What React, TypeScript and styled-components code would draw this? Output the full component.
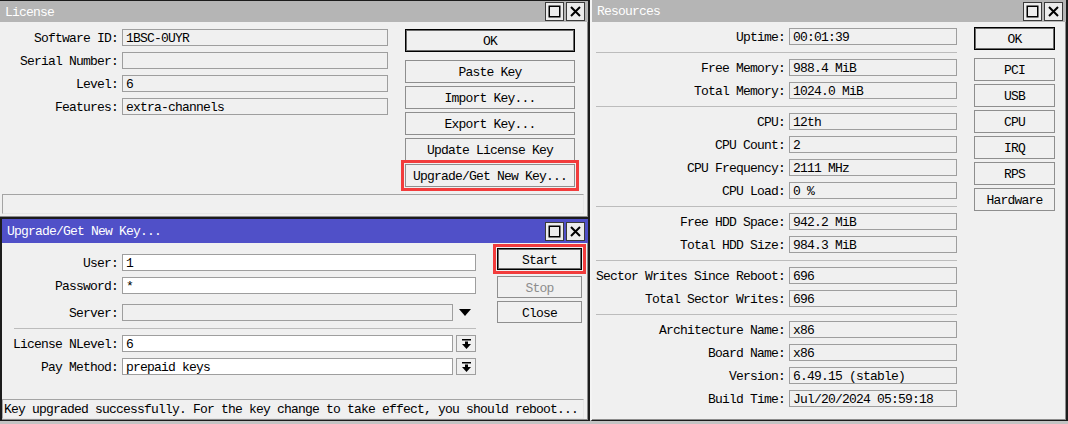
import React from "react";
import styled, { createGlobalStyle } from "styled-components";

const GlobalStyle = createGlobalStyle`
  * { box-sizing: border-box; }
  html, body { margin: 0; padding: 0; }
  body {
    background: #c4c4c4;
    font-family: "Liberation Mono", "DejaVu Sans Mono", monospace;
    font-size: 13px;
    letter-spacing: -0.8px;
    color: #000;
  }
`;

const Desktop = styled.main`
  display: flex;
  align-items: flex-start;
  width: 1068px;
  height: 424px;
  overflow: hidden;
  background: #c4c4c4;
`;

const LeftColumn = styled.div`
  display: flex;
  flex-direction: column;
  width: 590px;
  flex: none;
`;

const WindowFrame = styled.section<{
  $h: number;
  $w: number;
  $borders: string;
  $leftColor?: string;
}>`
  display: flex;
  flex-direction: column;
  width: ${(p) => p.$w}px;
  height: ${(p) => p.$h}px;
  flex: none;
  background: #f0f0f0;
  border-style: solid;
  border-color: #1c1c1c;
  border-left-color: ${(p) => p.$leftColor ?? "#1c1c1c"};
  border-width: ${(p) => p.$borders};
  box-shadow: inset -1px -1px 0 #8c8c8c;
`;

const TitleBar = styled.header<{ $active?: boolean; $h: number }>`
  display: flex;
  align-items: center;
  justify-content: space-between;
  height: ${(p) => p.$h}px;
  flex: none;
  padding: 0 3px 0 5px;
  background: ${(p) => (p.$active ? "#5050c8" : "#b5b5b5")};
  color: #fff;
`;

const TitleText = styled.span`
  white-space: nowrap;
  padding-top: 1px;
`;

const TitleButtons = styled.div`
  display: flex;
  gap: 2px;
`;

const TitleButton = styled.span`
  display: flex;
  align-items: center;
  justify-content: center;
  width: 19px;
  height: 19px;
  background: #ececec;
  border: 1px solid #3a3a3a;
`;

const Body = styled.div<{ $pt: number; $pl: number }>`
  display: flex;
  align-items: flex-start;
  flex: 1;
  padding: ${(p) => p.$pt}px 0 0 ${(p) => p.$pl}px;
`;

const Form = styled.div<{ $mt: number }>`
  display: flex;
  flex-direction: column;
  gap: 6px;
  margin-top: ${(p) => p.$mt}px;
  flex: none;
`;

const Row = styled.div<{ $extra?: number }>`
  display: flex;
  align-items: center;
  height: 17px;
  margin-top: ${(p) => p.$extra ?? 0}px;
`;

const Label = styled.span<{ $w: number }>`
  display: flex;
  justify-content: flex-end;
  width: ${(p) => p.$w}px;
  margin-right: 4px;
  padding-top: 2px;
  white-space: nowrap;
  flex: none;
`;

const Field = styled.div<{ $w: number; $tone?: "plain" | "white" | "disabled" }>`
  width: ${(p) => p.$w}px;
  height: 17px;
  flex: none;
  background: ${(p) => (p.$tone === "white" ? "#ffffff" : "#f0f0f0")};
  border: 1px solid #9e9e9e;
  padding: 1px 3px 0;
  line-height: 15px;
  white-space: pre;
  overflow: hidden;
`;

const Separator = styled.div<{ $w: number; $ml?: number }>`
  width: ${(p) => p.$w}px;
  height: 1px;
  margin: 1px 0 0 ${(p) => p.$ml ?? 0}px;
  background: #bcbcbc;
`;

const DropArea = styled.span`
  display: flex;
  align-items: center;
  justify-content: center;
  width: 23px;
  height: 17px;
  flex: none;
`;

const ComboButton = styled.span`
  display: flex;
  align-items: center;
  justify-content: center;
  width: 20px;
  height: 17px;
  margin-left: 3px;
  flex: none;
  background: #f0f0f0;
  border: 1px solid #9e9e9e;
`;

const ButtonStack = styled.div<{ $w: number; $ml: number }>`
  display: flex;
  flex-direction: column;
  gap: 3px;
  width: ${(p) => p.$w}px;
  margin-left: ${(p) => p.$ml}px;
  flex: none;
`;

const Button = styled.button<{
  $default?: boolean;
  $highlight?: boolean;
  $h?: number;
  $after?: number;
  $muted?: boolean;
}>`
  height: ${(p) => p.$h ?? 23}px;
  margin: 0 0 ${(p) => p.$after ?? 0}px 0;
  padding: 2px 0 0;
  font: inherit;
  letter-spacing: inherit;
  color: ${(p) => (p.$muted ? "#8d8d8d" : "#000")};
  background: #f0f0f0;
  border: 1px solid ${(p) => (p.$default ? "#000" : "#8e8e8e")};
  box-shadow: ${(p) => (p.$default ? "inset 0 0 0 1px #6a6a6a" : "none")};
  outline: ${(p) => (p.$highlight ? "3px solid #f23c3c" : "none")};
  outline-offset: 1px;
  white-space: nowrap;
  cursor: default;
`;

const StatusBar = styled.div<{ $ml: number; $mr: number; $mb: number }>`
  height: 20px;
  flex: none;
  margin: 0 ${(p) => p.$mr}px ${(p) => p.$mb}px ${(p) => p.$ml}px;
  border: 1px solid;
  border-color: #a4a4a4 #e6e6e6 #e6e6e6 #a4a4a4;
  padding: 1px 1px 0;
  line-height: 18px;
  white-space: nowrap;
  overflow: hidden;
`;

const MaxIcon = () => (
  <svg width="13" height="13" viewBox="0 0 13 13">
    <rect x="1.25" y="1.25" width="10.5" height="10.5" fill="none" stroke="#000" strokeWidth="1.5" />
  </svg>
);

const CloseIcon = () => (
  <svg width="13" height="13" viewBox="0 0 13 13">
    <path d="M2 2 L11 11 M11 2 L2 11" stroke="#000" strokeWidth="2" />
  </svg>
);

const DownTriangle = () => (
  <svg width="12" height="7" viewBox="0 0 12 7">
    <polygon points="0,0 12,0 6,7" fill="#000" />
  </svg>
);

const ComboIcon = () => (
  <svg width="9" height="10" viewBox="0 0 9 10">
    <rect x="0" y="0" width="9" height="1.5" fill="#000" />
    <rect x="3" y="2.5" width="3" height="3" fill="#000" />
    <polygon points="0,5 9,5 4.5,10" fill="#000" />
  </svg>
);

const Title: React.FC<{ text: string; active?: boolean; h: number }> = ({ text, active, h }) => (
  <TitleBar $active={active} $h={h}>
    <TitleText>{text}</TitleText>
    <TitleButtons>
      <TitleButton>
        <MaxIcon />
      </TitleButton>
      <TitleButton>
        <CloseIcon />
      </TitleButton>
    </TitleButtons>
  </TitleBar>
);

const licenseRows: [string, string][] = [
  ["Software ID", "1BSC-0UYR"],
  ["Serial Number", ""],
  ["Level", "6"],
  ["Features", "extra-channels"],
];

const licenseButtons = [
  "Paste Key",
  "Import Key...",
  "Export Key...",
  "Update License Key",
];

const resourceGroups: [string, string][][] = [
  [["Uptime", "00:01:39"]],
  [
    ["Free Memory", "988.4 MiB"],
    ["Total Memory", "1024.0 MiB"],
  ],
  [
    ["CPU", "12th"],
    ["CPU Count", "2"],
    ["CPU Frequency", "2111 MHz"],
    ["CPU Load", "0 %"],
  ],
  [
    ["Free HDD Space", "942.2 MiB"],
    ["Total HDD Size", "984.3 MiB"],
  ],
  [
    ["Sector Writes Since Reboot", "696"],
    ["Total Sector Writes", "696"],
  ],
  [
    ["Architecture Name", "x86"],
    ["Board Name", "x86"],
    ["Version", "6.49.15 (stable)"],
    ["Build Time", "Jul/20/2024 05:59:18"],
  ],
];

const resourceButtons = ["PCI", "USB", "CPU", "IRQ", "RPS", "Hardware"];

const LicenseWindow = () => (
  <WindowFrame $w={590} $h={218} $borders="1px 2px 1px 0">
    <Title text="License" h={21} />
    <Body $pt={7} $pl={0}>
      <Form $mt={0}>
        {licenseRows.map(([label, value]) => (
          <Row key={label}>
            <Label $w={118}>{label}:</Label>
            <Field $w={266}>{value}</Field>
          </Row>
        ))}
      </Form>
      <ButtonStack $w={170} $ml={17}>
        <Button $default $after={5}>
          OK
        </Button>
        {licenseButtons.map((b) => (
          <Button key={b}>{b}</Button>
        ))}
        <Button $highlight>Upgrade/Get New Key...</Button>
      </ButtonStack>
    </Body>
    <StatusBar $ml={2} $mr={4} $mb={3} />
  </WindowFrame>
);

const UpgradeWindow = () => (
  <WindowFrame $w={590} $h={203} $borders="1px 2px 1px 2px">
    <Title text="Upgrade/Get New Key..." active h={24} />
    <Body $pt={5} $pl={0}>
      <Form $mt={6}>
        <Row>
          <Label $w={116}>User:</Label>
          <Field $w={354} $tone="white">1</Field>
        </Row>
        <Row>
          <Label $w={116}>Password:</Label>
          <Field $w={354} $tone="white">*</Field>
        </Row>
        <Row $extra={4}>
          <Label $w={116}>Server:</Label>
          <Field $w={331} $tone="disabled" />
          <DropArea>
            <DownTriangle />
          </DropArea>
        </Row>
        <Separator $w={462} $ml={12} />
        <Row>
          <Label $w={116}>License NLevel:</Label>
          <Field $w={331} $tone="white">6</Field>
          <ComboButton>
            <ComboIcon />
          </ComboButton>
        </Row>
        <Row>
          <Label $w={116}>Pay Method:</Label>
          <Field $w={331} $tone="white">prepaid keys</Field>
          <ComboButton>
            <ComboIcon />
          </ComboButton>
        </Row>
      </Form>
      <ButtonStack $w={85} $ml={21}>
        <Button $default $highlight $h={22} $after={3}>
          Start
        </Button>
        <Button $h={22} $muted>
          Stop
        </Button>
        <Button $h={22}>Close</Button>
      </ButtonStack>
    </Body>
    <StatusBar $ml={0} $mr={4} $mb={1}>
      Key upgraded successfully. For the key change to take effect, you should reboot...
    </StatusBar>
  </WindowFrame>
);

const ResourcesWindow = () => (
  <WindowFrame $w={478} $h={421} $borders="0 2px 1px 2px" $leftColor="#f4f4f4">
    <Title text="Resources" h={22} />
    <Body $pt={5} $pl={4}>
      <Form $mt={1}>
        {resourceGroups.map((group, gi) => (
          <React.Fragment key={gi}>
            {gi > 0 && <Separator $w={361} />}
            {group.map(([label, value]) => (
              <Row key={label}>
                <Label $w={189}>{label}:</Label>
                <Field $w={168}>{value}</Field>
              </Row>
            ))}
          </React.Fragment>
        ))}
      </Form>
      <ButtonStack $w={81} $ml={17}>
        <Button $default $after={5}>
          OK
        </Button>
        {resourceButtons.map((b) => (
          <Button key={b}>{b}</Button>
        ))}
      </ButtonStack>
    </Body>
  </WindowFrame>
);

export default function App() {
  return (
    <>
      <GlobalStyle />
      <Desktop>
        <LeftColumn>
          <LicenseWindow />
          <UpgradeWindow />
        </LeftColumn>
        <ResourcesWindow />
      </Desktop>
    </>
  );
}
